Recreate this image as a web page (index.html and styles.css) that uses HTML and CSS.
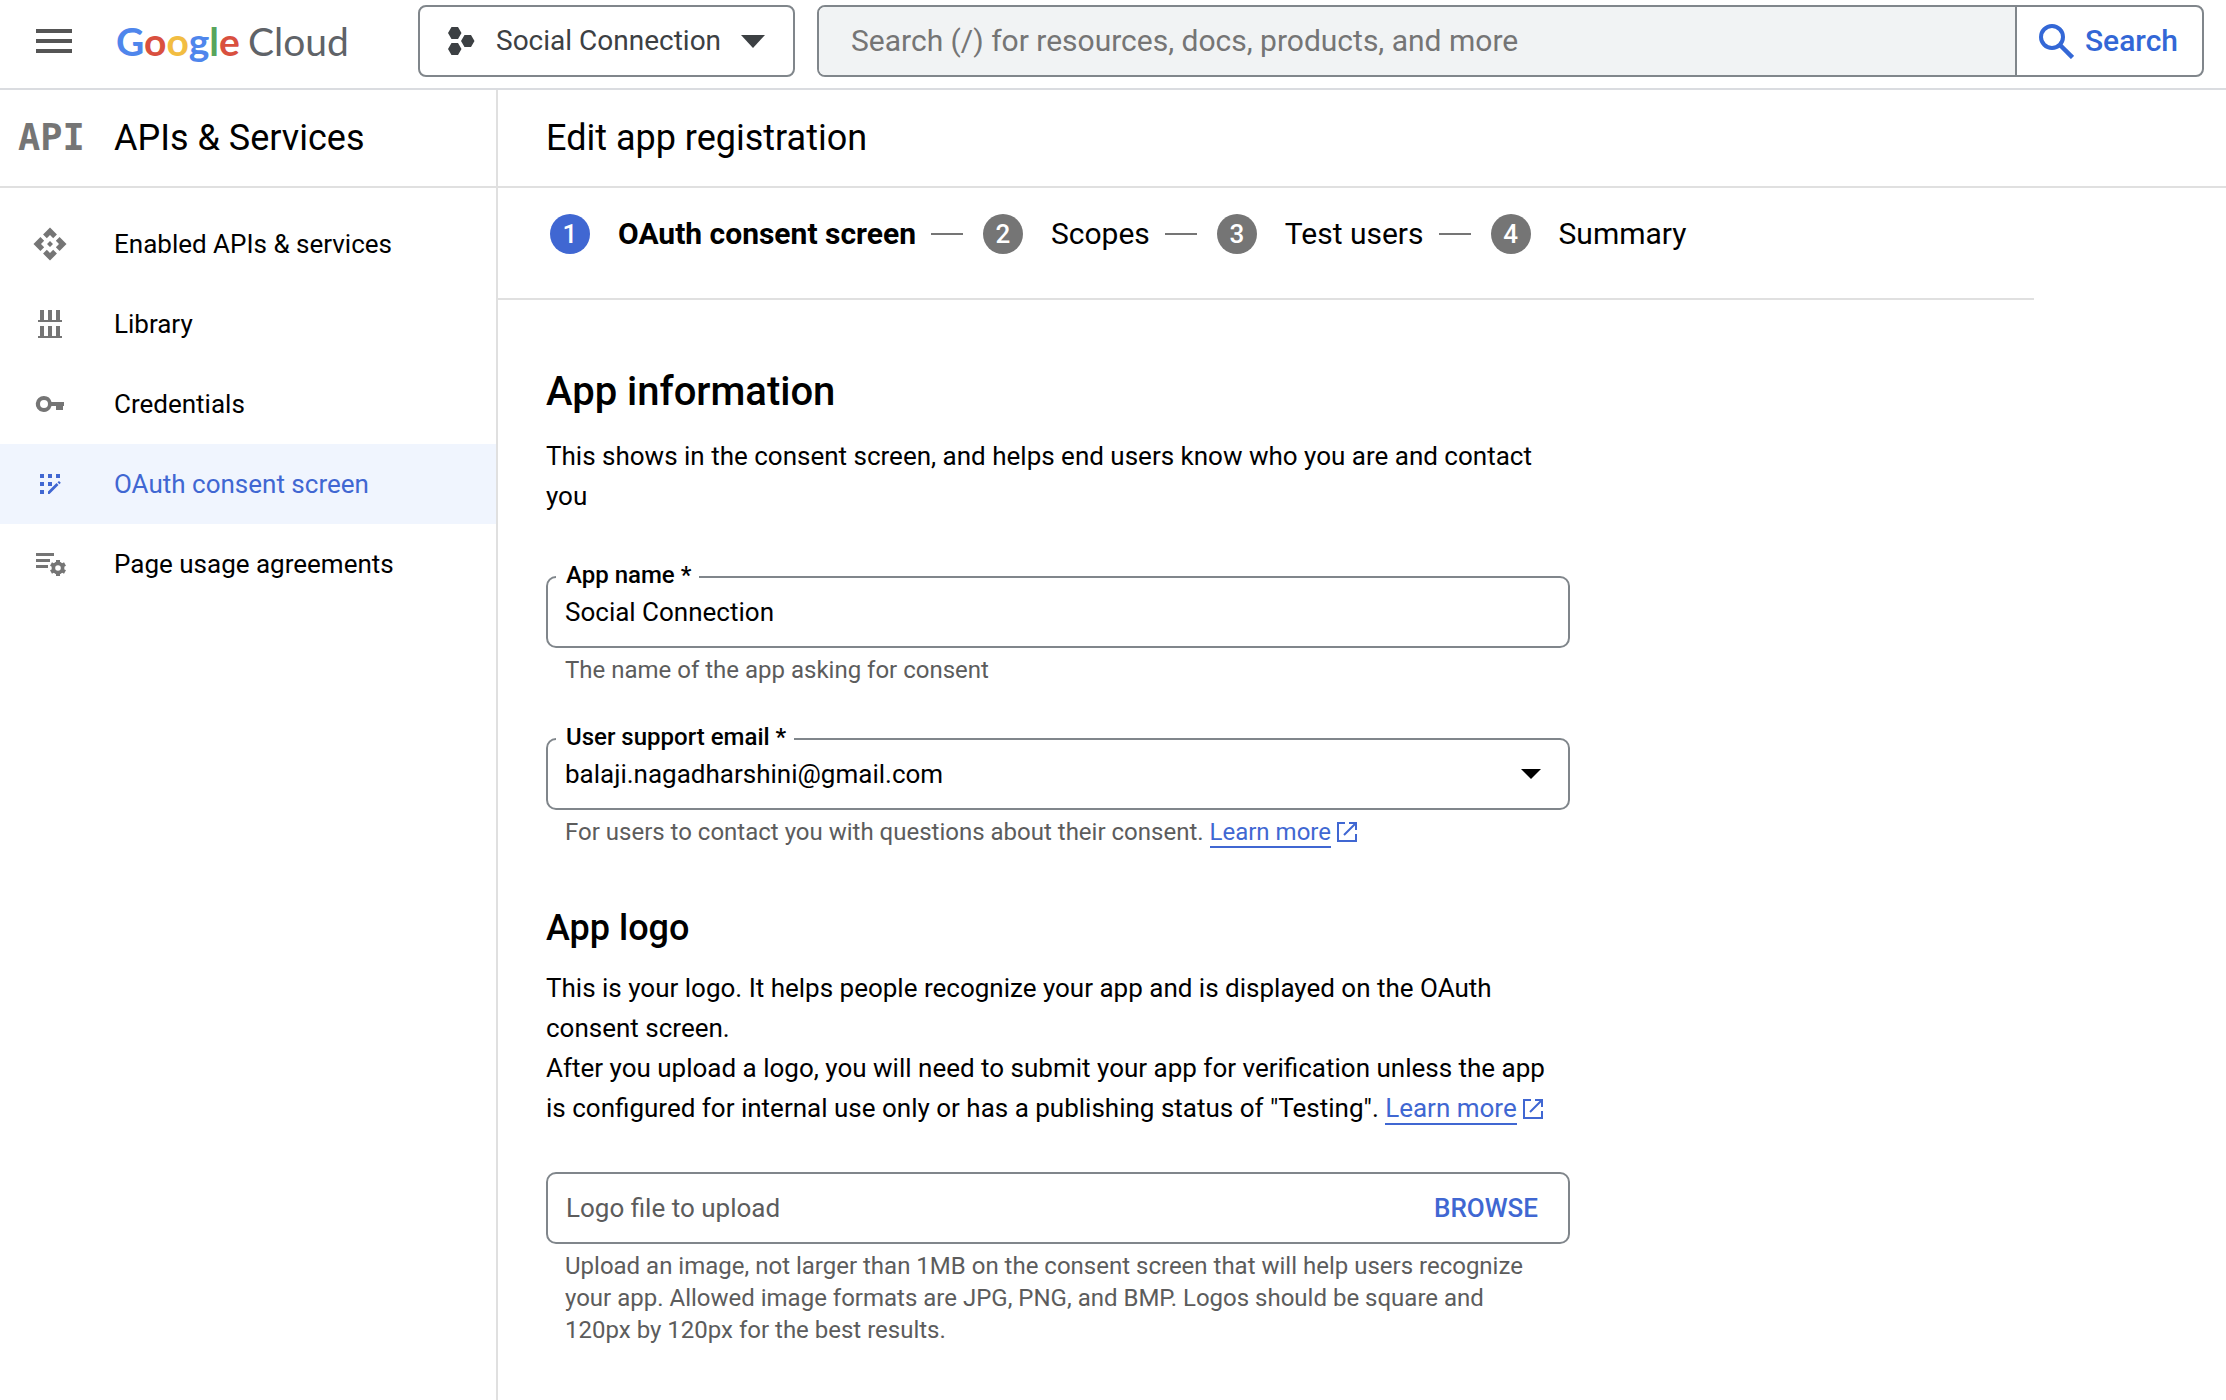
FILE: index.html
```html
<!DOCTYPE html>
<html lang="en">
<head>
<meta charset="utf-8">
<meta name="viewport" content="width=device-width, initial-scale=1">
<title>Edit app registration – APIs &amp; Services – Google Cloud</title>
<link rel="stylesheet" href="styles.css">
</head>
<body>
<header class="topbar">
  <button class="menu-button" type="button" aria-label="Main menu">
    <svg width="36" height="24" viewBox="0 0 36 24" fill="currentColor"><path d="M0 0h36v4H0zM0 10h36v4H0zM0 20h36v4H0z"/></svg>
  </button>
  <a class="logo" href="#" aria-label="Google Cloud"><span class="logo-google"><span class="blue">G</span><span class="red">o</span><span class="yellow">o</span><span class="blue">g</span><span class="green">l</span><span class="red">e</span></span><span class="logo-cloud">Cloud</span></a>
  <button class="project" type="button">
    <svg width="28" height="28" viewBox="0 0 28 28" fill="currentColor"><path d="M3.500 0h6.500l3.500 6-3.500 6H3.500L0 6zM3.500 16h6.500l3.500 6-3.500 6H3.500L0 22zM16.500 8h6.500l3.500 6-3.500 6h-6.500L13 14z"/></svg>
    <span class="project-name">Social Connection</span>
    <svg width="24" height="14" viewBox="0 0 24 14" fill="currentColor"><path d="M0 1h24L12 14z"/></svg>
  </button>
  <form class="search" role="search">
    <input class="search-input" type="search" aria-label="Search" placeholder="Search (/) for resources, docs, products, and more">
    <button class="search-button" type="button">
      <svg width="35" height="35" viewBox="0 0 35 35" fill="none" stroke="currentColor"><circle cx="13" cy="13" r="11" stroke-width="4"/><path d="M21 21l12.500 12.500" stroke-width="4.500"/></svg>
      Search
    </button>
  </form>
</header>
<div class="layout">
  <aside class="sidebar">
    <div class="sidebar-head"><span class="api-mark" aria-hidden="true">API</span><h2 class="bar-title">APIs &amp; Services</h2></div>
    <nav class="nav">
      <a class="nav-item" href="#"><svg class="nav-icon" viewBox="0 0 24 24" fill="currentColor"><path d="M14 12l-2 2-2-2 2-2 2 2zm-2-6l2.120 2.120 2.500-2.500L12 1 7.380 5.620l2.500 2.500L12 6zm-6 6l2.120-2.120-2.500-2.500L1 12l4.620 4.620 2.500-2.500L6 12zm12 0l-2.120 2.120 2.500 2.500L23 12l-4.620-4.620-2.500 2.500L18 12zm-6 6l-2.120-2.120-2.500 2.500L12 23l4.620-4.620-2.500-2.500L12 18z"/></svg>Enabled APIs &amp; services</a>
      <a class="nav-item" href="#"><svg class="nav-icon" viewBox="0 0 36 36" fill="currentColor"><path d="M8 4h4v10h4V4h4v10h4V4h4v10h2v2H6v-2h2zM8 20h4v10h4V20h4v10h4V20h4v10h2v2H6v-2h2z"/></svg>Library</a>
      <a class="nav-item" href="#"><svg class="nav-icon" viewBox="0 0 36 36" fill="currentColor"><path fill-rule="evenodd" d="M12 10a8 8 0 0 1 7.500 6H32v4h-1v4h-7v-4h-4.500A8 8 0 1 1 12 10zm0 4a4 4 0 1 0 0 8 4 4 0 0 0 0-8z"/></svg>Credentials</a>
      <a class="nav-item active" href="#" aria-current="page"><svg class="nav-icon" viewBox="0 0 36 36" fill="currentColor"><path d="M8 8h4v4H8zM16 8h4v4h-4zM24 8h4v4h-4zM8 16h4v4H8zM16 16h4v4h-4zM8 24h4v4H8zM16 28v-2.500l8.500-8.500 2 2-9 9zM25.500 16.200l1.500-1.200 1.800 1.800-1.300 1.400z"/></svg>OAuth consent screen</a>
      <a class="nav-item" href="#"><svg class="nav-icon" viewBox="0 0 36 36" fill="none" stroke="currentColor"><path stroke-width="3" d="M4 8.500h18M4 14.500h14M4 20.500h12"/><circle cx="26" cy="22" r="4.600" stroke-width="3.600"/><path stroke-width="4" d="M26 14v3M26 27v3M19 18l2.700 1.500M30.300 24.500L33 26M19 26l2.700-1.500M30.300 19.500L33 18"/></svg>Page usage agreements</a>
    </nav>
  </aside>
  <main class="main">
    <div class="main-head"><h1 class="bar-title">Edit app registration</h1></div>
    <ol class="stepper">
      <li class="step current" aria-current="step"><span class="step-number">1</span>OAuth consent screen</li>
      <li class="step"><span class="step-number">2</span>Scopes</li>
      <li class="step"><span class="step-number">3</span>Test users</li>
      <li class="step"><span class="step-number">4</span>Summary</li>
    </ol>
    <form class="content">
      <h2 class="section-title">App information</h2>
      <p class="text">This shows in the consent screen, and helps end users know who you are and contact you</p>
      <div class="field">
        <label class="field-label" for="app-name">App name *</label>
        <input class="control" id="app-name" type="text" value="Social Connection">
        <p class="hint">The name of the app asking for consent</p>
      </div>
      <div class="field">
        <label class="field-label" for="email">User support email *</label>
        <select class="control" id="email"><option>balaji.nagadharshini@gmail.com</option></select>
        <svg class="select-arrow" viewBox="0 0 20 10" fill="currentColor"><path d="M0 0h20L10 10z"/></svg>
        <p class="hint">For users to contact you with questions about their consent. <a class="link" href="#"><span class="link-text">Learn more</span><svg class="external" viewBox="0 0 20 20" fill="none" stroke="currentColor" stroke-width="2"><path d="M8 1H1v18h18v-7M12 1h7v7M19 1L7 13"/></svg></a></p>
      </div>
      <h3 class="subsection-title">App logo</h3>
      <p class="text">This is your logo. It helps people recognize your app and is displayed on the OAuth consent screen.</p>
      <p class="text">After you upload a logo, you will need to submit your app for verification unless the app is configured for internal use only or has a publishing status of "Testing". <a class="link" href="#"><span class="link-text">Learn more</span><svg class="external" viewBox="0 0 20 20" fill="none" stroke="currentColor" stroke-width="2"><path d="M8 1H1v18h18v-7M12 1h7v7M19 1L7 13"/></svg></a></p>
      <div class="field">
        <div class="upload">
          <input class="upload-input" type="text" aria-label="Logo file to upload" placeholder="Logo file to upload">
          <button class="browse" type="button">BROWSE</button>
        </div>
        <p class="hint">Upload an image, not larger than 1MB on the consent screen that will help users recognize your app. Allowed image formats are JPG, PNG, and BMP. Logos should be square and 120px by 120px for the best results.</p>
      </div>
    </form>
  </main>
</div>
</body>
</html>
```
FILE: styles.css
```css
* { box-sizing: border-box; }

body {
  margin: 0;
  min-height: 100vh;
  display: flex;
  flex-direction: column;
  background: #fff;
  color: #000;
  font: 26px/40px Roboto, "Liberation Sans", sans-serif;
}

h1, h2, h3, p, ol { margin: 0; padding: 0; }
button, input, select { font: inherit; color: inherit; }
button { padding: 0; border: 0; background: none; cursor: pointer; }
svg { flex: none; }

/* Top bar */
.topbar {
  display: flex;
  align-items: center;
  height: 90px;
  padding: 0 22px 6px 36px;
  border-bottom: 2px solid #dadce0;
}
.menu-button { display: flex; margin-right: 44px; color: #555; }
.logo {
  display: flex;
  gap: 8px;
  width: 302px;
  font: 39px/48px Lato, sans-serif;
  text-decoration: none;
}
.logo-google { font-weight: 700; }
.logo-cloud { color: #5f6368; }
.blue { color: #4f86ec; }
.red { color: #d9503f; }
.yellow { color: #f2bd42; }
.green { color: #58a55c; }
.project {
  display: flex;
  align-items: center;
  width: 377px;
  height: 72px;
  margin-right: 22px;
  padding: 0 28px;
  border: 2px solid #80868b;
  border-radius: 8px;
  color: #3c4043;
  font-size: 28px;
}
.project-name { margin: 0 20px; flex: 1; white-space: nowrap; }
.search {
  display: flex;
  flex: 1;
  height: 72px;
  border: 2px solid #80868b;
  border-radius: 8px;
  overflow: hidden;
}
.search-input {
  flex: 1;
  min-width: 0;
  padding: 0 32px;
  border: 0;
  background: #f1f3f4;
  font-size: 30px;
}
.search-input::placeholder { color: #757575; opacity: 1; }
.search-button {
  display: flex;
  align-items: center;
  gap: 11px;
  padding: 0 24px 0 22px;
  border-left: 2px solid #80868b;
  color: #3367d6;
  font-size: 30px;
  font-weight: 500;
}

/* Page frame */
.layout { display: flex; flex: 1; }
.sidebar { flex: none; width: 498px; border-right: 2px solid #e0e0e0; }
.main { flex: 1; min-width: 0; }
.sidebar-head, .main-head {
  display: flex;
  align-items: center;
  height: 98px;
  border-bottom: 2px solid #e0e0e0;
}
.sidebar-head { padding-left: 18px; }
.main-head { padding-left: 48px; }
.bar-title { font-size: 36px; line-height: 48px; font-weight: 400; }
.api-mark {
  width: 96px;
  color: #757575;
  font: 700 37px/48px "DejaVu Sans Mono", monospace;
}

/* Side navigation */
.nav { padding-top: 16px; }
.nav-item {
  display: flex;
  align-items: center;
  gap: 46px;
  height: 80px;
  padding-left: 32px;
  color: #000;
  text-decoration: none;
}
.nav-icon { width: 36px; height: 36px; color: #757575; }
.nav-item.active { background: #f0f5fe; color: #4067d2; }
.nav-item.active .nav-icon { color: #4067d2; }

/* Steps */
.stepper {
  display: flex;
  align-items: flex-start;
  max-width: 1536px;
  height: 112px;
  padding: 26px 0 0 52px;
  border-bottom: 2px solid #e0e0e0;
  list-style: none;
  font-size: 30px;
}
.step { display: flex; align-items: center; white-space: nowrap; }
.step + .step::before {
  content: "";
  width: 32px;
  height: 2px;
  margin: 0 20px 0 15px;
  background: #757575;
}
.step.current { font-weight: 700; }
.step-number {
  width: 40px;
  height: 40px;
  margin-right: 28px;
  border-radius: 50%;
  background: #757575;
  color: #fff;
  font-size: 26px;
  font-weight: 500;
  text-align: center;
}
.step.current .step-number { background: #4067d2; }

/* Form */
.content { max-width: 1072px; padding: 68px 0 48px 48px; }
.section-title { margin-bottom: 20px; font-size: 40px; line-height: 48px; font-weight: 500; }
.subsection-title { margin: 56px 0 16px; font-size: 36px; line-height: 48px; font-weight: 500; }
.field { position: relative; margin-top: 52px; }
.text + .field { margin-top: 44px; }
.text + .field:has(.field-label) { margin-top: 60px; }
.field-label {
  position: absolute;
  top: -17px;
  left: 10px;
  padding: 0 8px 0 10px;
  background: #fff;
  font-size: 24px;
  line-height: 32px;
  font-weight: 500;
}
.control, .upload {
  display: block;
  width: 100%;
  height: 72px;
  padding: 0 17px;
  border: 2px solid #80868b;
  border-radius: 10px;
  background: #fff;
  appearance: none;
}
.select-arrow { position: absolute; top: 31px; right: 29px; width: 20px; height: 10px; }
.hint { padding: 6px 19px 0; color: #5c5c5c; font-size: 24px; line-height: 32px; }
.link { color: #4067d2; text-decoration: none; white-space: nowrap; }
.link-text { border-bottom: 2px solid; }
.external { width: 20px; height: 20px; margin-left: 6px; vertical-align: -2px; }
.upload { display: flex; align-items: center; padding: 0 30px 0 18px; }
.upload-input { flex: 1; min-width: 0; padding: 0; border: 0; background: none; }
.upload-input::placeholder { color: #5c5c5c; opacity: 1; }
.browse { color: #4067d2; font-weight: 500; }
```
